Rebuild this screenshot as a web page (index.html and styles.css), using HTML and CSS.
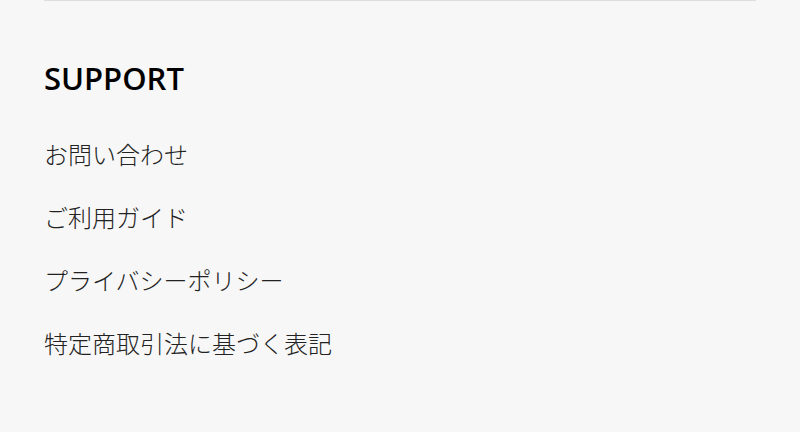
FILE: index.html
```html
<!DOCTYPE html>
<html lang="ja">
<head>
<meta charset="utf-8">
<title>Support</title>
<link rel="stylesheet" href="styles.css">
</head>
<body>
<div class="page">
  <section class="support">
    <h2 class="support-title">SUPPORT</h2>
    <ul class="support-list">
      <li class="support-item"><a href="#" class="support-link">お問い合わせ</a></li>
      <li class="support-item"><a href="#" class="support-link">ご利用ガイド</a></li>
      <li class="support-item"><a href="#" class="support-link">プライバシーポリシー</a></li>
      <li class="support-item"><a href="#" class="support-link">特定商取引法に基づく表記</a></li>
    </ul>
  </section>
</div>
</body>
</html>
```

FILE: styles.css
```css
html, body {
  margin: 0;
  padding: 0;
  background: #f7f7f7;
}
body {
  font-family: "Open Sans", "Noto Sans CJK JP", sans-serif;
  color: #222;
}
.page {
  padding: 0 44px;
}
.support {
  border-top: 1px solid #dddddd;
  padding-top: 57px;
}
.support-title {
  margin: 0 0 38px;
  font-family: "Open Sans", sans-serif;
  font-size: 31px;
  line-height: 40px;
  font-weight: 600;
  color: #000;
}
.support-list {
  list-style: none;
  margin: 0;
  padding: 0;
}
.support-item {
  font-family: "Noto Sans CJK JP", sans-serif;
  font-size: 24px;
  line-height: 36px;
  font-weight: 300;
}
.support-item + .support-item {
  margin-top: 27px;
}
.support-link {
  color: #222;
  text-decoration: none;
}
```
